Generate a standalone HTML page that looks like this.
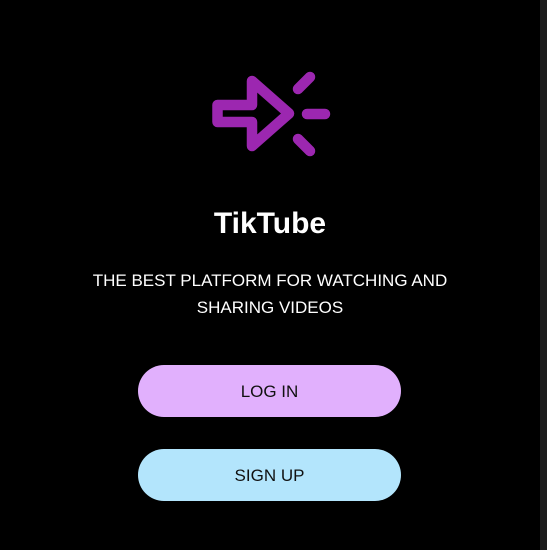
<!DOCTYPE html>
<html><head><meta charset="utf-8"><style>
html,body{margin:0;padding:0;}
body{width:547px;height:550px;background:#000;position:relative;overflow:hidden;font-family:"Liberation Sans",sans-serif;}
.strip{position:absolute;right:0;top:0;width:7px;height:550px;background:#1c1c1c;}
.t{position:absolute;left:0;width:540px;text-align:center;color:#fff;}
.btn{position:absolute;left:138px;width:263px;height:52px;border-radius:26px;text-align:center;line-height:53px;font-size:17px;color:#111;}
</style></head><body>
<div class="strip"></div>
<svg style="position:absolute;left:0;top:0" width="547" height="200">
<g fill="none" stroke="#9c27b0" stroke-width="10.5" stroke-linecap="round" stroke-linejoin="round">
<path d="M217.5 105 L252 105 L252 81 L289 113.5 L252 146 L252 122 L217.5 122 Z"/>
<path d="M298 89 L310 77"/>
<path d="M307 114 L325 114"/>
<path d="M298 139 L310 151"/>
</g></svg>
<div class="t" style="top:207px;font-size:30px;font-weight:bold;">TikTube</div>
<div class="t" style="top:267px;font-size:17px;line-height:27px;">THE BEST PLATFORM FOR WATCHING AND<br>SHARING VIDEOS</div>
<div class="btn" style="top:365px;background:#e1b0fd;">LOG IN</div>
<div class="btn" style="top:449px;background:#b3e5fc;">SIGN UP</div>
</body></html>
